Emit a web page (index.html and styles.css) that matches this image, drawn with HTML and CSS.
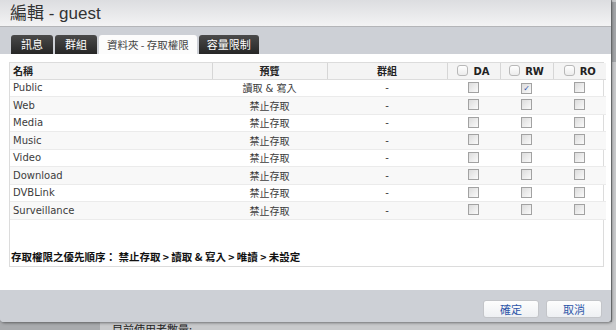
FILE: index.html
```html
<!DOCTYPE html>
<html>
<head>
    <meta charset="utf-8" />
    <title>編輯 - guest</title>
    <link rel="stylesheet" href="styles.css">
</head>
<body>
    <div class="screen">
        <div class="dialog">
            <div class="title">編輯 - guest</div>
            <div class="tabbar">
                <span class="tab">訊息</span>
                <span class="tab">群組</span>
                <span class="tab active">資料夾 - 存取權限</span>
                <span class="tab">容量限制</span>
            </div>
            <div class="content">
                <div class="box">
                    <table class="grid">
                        <tr class="head">
                            <td class="c-name">名稱</td>
                            <td class="c-prev">預覽</td>
                            <td class="c-group">群組</td>
                            <td class="c-chk"><span class="hbox"></span>DA</td>
                            <td class="c-chk"><span class="hbox"></span>RW</td>
                            <td class="c-chk last"><span class="hbox"></span>RO</td>
                        </tr>
                        <tr>
                            <td>Public</td><td class="mid">讀取 &amp; 寫入</td><td class="mid">-</td>
                            <td class="mid"><span class="cb"></span></td><td class="mid"><span class="cb on">&#10003;</span></td><td class="mid"><span class="cb"></span></td>
                        </tr>
                        <tr class="alt">
                            <td>Web</td><td class="mid">禁止存取</td><td class="mid">-</td>
                            <td class="mid"><span class="cb"></span></td><td class="mid"><span class="cb"></span></td><td class="mid"><span class="cb"></span></td>
                        </tr>
                        <tr>
                            <td>Media</td><td class="mid">禁止存取</td><td class="mid">-</td>
                            <td class="mid"><span class="cb"></span></td><td class="mid"><span class="cb"></span></td><td class="mid"><span class="cb"></span></td>
                        </tr>
                        <tr class="alt">
                            <td>Music</td><td class="mid">禁止存取</td><td class="mid">-</td>
                            <td class="mid"><span class="cb"></span></td><td class="mid"><span class="cb"></span></td><td class="mid"><span class="cb"></span></td>
                        </tr>
                        <tr>
                            <td>Video</td><td class="mid">禁止存取</td><td class="mid">-</td>
                            <td class="mid"><span class="cb"></span></td><td class="mid"><span class="cb"></span></td><td class="mid"><span class="cb"></span></td>
                        </tr>
                        <tr class="alt">
                            <td>Download</td><td class="mid">禁止存取</td><td class="mid">-</td>
                            <td class="mid"><span class="cb"></span></td><td class="mid"><span class="cb"></span></td><td class="mid"><span class="cb"></span></td>
                        </tr>
                        <tr>
                            <td>DVBLink</td><td class="mid">禁止存取</td><td class="mid">-</td>
                            <td class="mid"><span class="cb"></span></td><td class="mid"><span class="cb"></span></td><td class="mid"><span class="cb"></span></td>
                        </tr>
                        <tr class="alt">
                            <td>Surveillance</td><td class="mid">禁止存取</td><td class="mid">-</td>
                            <td class="mid"><span class="cb"></span></td><td class="mid"><span class="cb"></span></td><td class="mid"><span class="cb"></span></td>
                        </tr>
                    </table>
                    <div class="note">存取權限之優先順序： 禁止存取 &gt; 讀取 &amp; 寫入 &gt; 唯讀 &gt; 未設定</div>
                </div>
            </div>
            <div class="footer">
                <button class="btn">確定</button>
                <button class="btn">取消</button>
            </div>
        </div>
        <div class="scroll"><div class="thumb"></div></div>
    </div>
    <div class="behind">
        <div class="side"></div>
        <div class="page">目前使用者數量:</div>
    </div>
</body>
</html>
```

FILE: styles.css
```css
*{
    margin: 0;
    padding: 0;
    box-sizing: border-box;
}
body{
    width: 616px;
    height: 330px;
    overflow: hidden;
    background: #a9abae;
    font-family: "DejaVu Sans", "Noto Sans CJK TC", sans-serif;
    font-size: 10px;
    color: #333;
}
.screen{
    display: flex;
    height: 322px;
}
.dialog{
    width: 611px;
    height: 322px;
    display: flex;
    flex-direction: column;
    background: #cdd0d6;
    border-radius: 0 0 4px 4px;
    box-shadow: 1px 1px 3px rgba(0,0,0,0.45);
    overflow: hidden;
    position: relative;
    z-index: 1;
}
.title{
    height: 27px;
    padding: 3px 0 0 10px;
    background: linear-gradient(#dcdde0, #f3f3f4);
    border-bottom: 1px solid #b4b5b8;
    font-family: "Liberation Sans", "Noto Sans CJK TC", sans-serif;
    font-size: 17px;
    color: #333;
    line-height: 21px;
}
.tabbar{
    height: 27px;
    padding: 8px 0 0 11px;
    display: flex;
    gap: 2px;
    background: #cdd0d6;
}
.tab{
    height: 19px;
    min-width: 42px;
    padding: 0 8px;
    background: linear-gradient(#4a4a4a, #262626);
    border-radius: 3px 3px 0 0;
    color: #fff;
    font-family: "Noto Sans CJK TC", sans-serif;
    font-size: 11px;
    line-height: 19px;
    text-align: center;
    white-space: nowrap;
}
.tab.active{
    background: #fcfcfc;
    color: #444;
    padding: 0 8px;
    font-size: 10.5px;
}
.content{
    height: 236px;
    background: #fff;
    padding: 8px 7px 0 9px;
}
.box{
    height: 205px;
    border: 1px solid #dcdcdc;
    display: flex;
    flex-direction: column;
}
.grid{
    width: 100%;
    border-collapse: collapse;
    table-layout: fixed;
}
.grid td{
    height: 17.5px;
    padding: 0 2px;
    border-bottom: 1px solid #ebebeb;
    white-space: nowrap;
    color: #3c3c3c;
}
.grid .head td{
    height: 16px;
    background: #f4f4f4;
    border-right: 1px solid #d6d6d6;
    border-bottom: 1px solid #dcdcdc;
    font-weight: bold;
    text-align: center;
    color: #222;
}
.grid .head td.last{
    border-right: none;
}
.grid .head td.c-name{
    text-align: left;
    padding-left: 3px;
}
.c-name{ width: 202px; }
.c-prev{ width: 115px; }
.c-group{ width: 120px; }
.c-chk{ width: 53px; }
.grid tr.alt td{
    background: #f8f8f8;
}
.grid td.mid{
    text-align: center;
}
.grid td:first-child{
    padding-left: 3px;
}
.hbox{
    display: inline-block;
    width: 11px;
    height: 11px;
    margin-right: 5px;
    border: 1px solid #b8b8b8;
    border-radius: 3px;
    background: linear-gradient(#fff, #ececec);
    vertical-align: -1px;
}
.cb{
    display: inline-block;
    width: 11px;
    height: 11px;
    border: 1px solid #a2a2a2;
    background: linear-gradient(135deg, #dcdcdc, #fafafa);
    vertical-align: -1px;
    font-size: 8px;
    line-height: 9px;
    color: #3050a8;
    text-align: center;
}
.note{
    margin-top: auto;
    padding: 0 0 2px 1px;
    font-weight: bold;
    font-family: "Noto Sans CJK TC", sans-serif;
    font-size: 10.5px;
    color: #111;
}
.footer{
    flex: 1;
    display: flex;
    justify-content: flex-end;
    align-items: flex-start;
    gap: 7px;
    padding: 10px 9px 0 0;
    background: #cdd0d6;
}
.btn{
    width: 56px;
    height: 18px;
    border: 1px solid #c3c5c9;
    border-radius: 3px;
    background: linear-gradient(#fdfdfd, #eef0f3);
    color: #2d55a8;
    font-family: "Noto Sans CJK TC", sans-serif;
    font-size: 11px;
    line-height: 16px;
}
.scroll{
    width: 5px;
    background: #c8c9cb;
    border-left: 1px solid #8f9194;
}
.thumb{
    height: 60px;
    margin-top: 2px;
    background: #a3a5a8;
}
.behind{
    display: flex;
    height: 8px;
}
.side{
    width: 100px;
    background: #a9abae;
}
.page{
    flex: 1;
    background: #c9cacc;
    padding-left: 12px;
    font-family: "Noto Sans CJK TC", sans-serif;
    font-size: 11px;
    line-height: 14px;
    color: #222;
}
```
